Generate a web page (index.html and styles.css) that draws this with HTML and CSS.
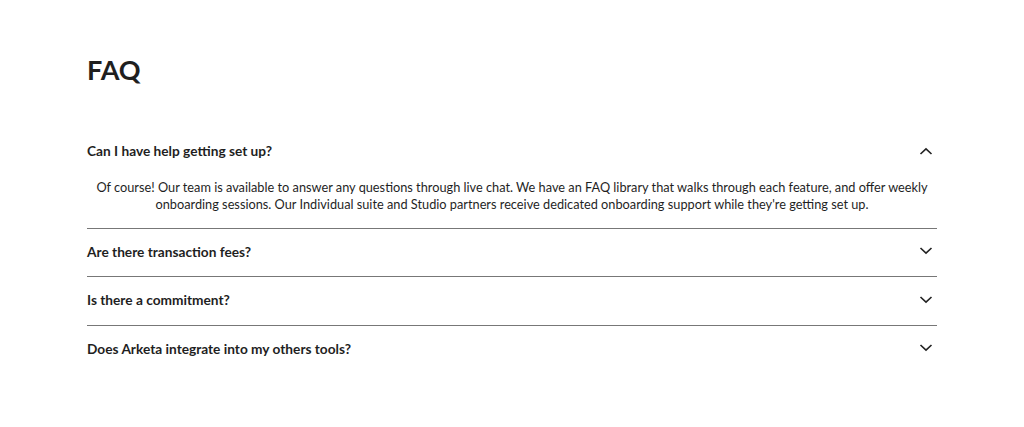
FILE: index.html
```html
<!DOCTYPE html>
<html lang="en">
<head>
<meta charset="utf-8">
<title>FAQ</title>
<link rel="stylesheet" href="styles.css">
</head>
<body>
<main class="faq">
  <h1 class="faq-title">FAQ</h1>
  <div class="faq-list">
    <div class="faq-item open">
      <div class="faq-q">
        <span>Can I have help getting set up?</span>
        <svg class="chev" viewBox="0 0 14 8" width="14" height="8"><path d="M1.5 7L7 1.8L12.5 7" fill="none" stroke="#222" stroke-width="1.6"/></svg>
      </div>
      <p class="faq-a">Of course! Our team is available to answer any questions through live chat. We have an FAQ library that walks through each feature, and offer weekly onboarding sessions. Our Individual suite and Studio partners receive dedicated onboarding support while they're getting set up.</p>
    </div>
    <div class="faq-item">
      <div class="faq-q">
        <span>Are there transaction fees?</span>
        <svg class="chev" viewBox="0 0 14 8" width="14" height="8"><path d="M1.5 1L7 6.2L12.5 1" fill="none" stroke="#222" stroke-width="1.6"/></svg>
      </div>
    </div>
    <div class="faq-item">
      <div class="faq-q">
        <span>Is there a commitment?</span>
        <svg class="chev" viewBox="0 0 14 8" width="14" height="8"><path d="M1.5 1L7 6.2L12.5 1" fill="none" stroke="#222" stroke-width="1.6"/></svg>
      </div>
    </div>
    <div class="faq-item last">
      <div class="faq-q">
        <span>Does Arketa integrate into my others tools?</span>
        <svg class="chev" viewBox="0 0 14 8" width="14" height="8"><path d="M1.5 1L7 6.2L12.5 1" fill="none" stroke="#222" stroke-width="1.6"/></svg>
      </div>
    </div>
  </div>
</main>
</body>
</html>
```

FILE: styles.css
```css
* { box-sizing: border-box; }
html, body { margin: 0; padding: 0; background: #fff; }
body {
  font-family: "Lato", "Liberation Sans", sans-serif;
  color: #1f1f1f;
}
.faq {
  width: 850px;
  margin: 0 auto;
  padding-top: 50px;
}
.faq-title {
  margin: 0;
  font-size: 27px;
  font-weight: 700;
  line-height: 40px;
  letter-spacing: 0;
}
.faq-list {
  margin-top: 38px;
}
.faq-item {
  border-bottom: 1px solid #777;
}
.faq-item.last { border-bottom: none; }
.faq-q {
  height: 47.5px;
  display: flex;
  align-items: center;
  justify-content: space-between;
  font-size: 13.7px;
  font-weight: 700;
  padding-right: 4px;
  padding-bottom: 2px;
}
.chev { display: block; }
.faq-a {
  margin: 3px 0 0;
  padding: 0 0 15px;
  text-align: center;
  font-size: 12.75px;
  line-height: 17px;
}
```
